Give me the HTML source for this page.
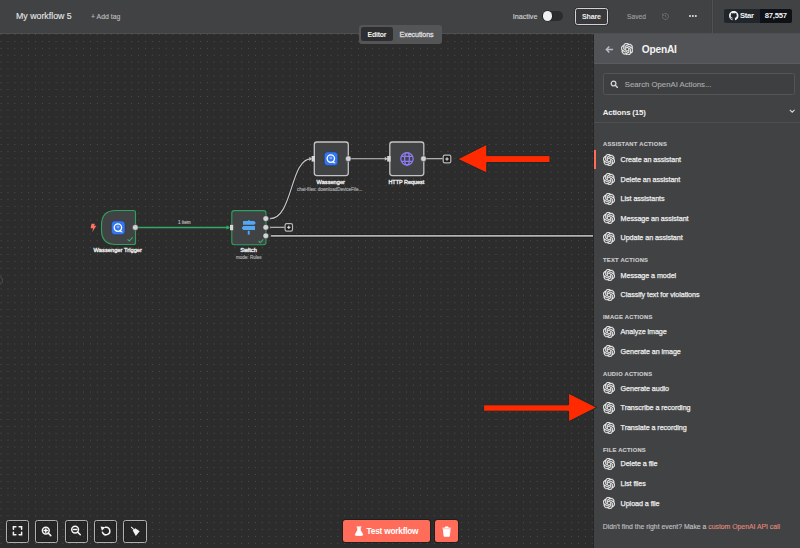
<!DOCTYPE html>
<html><head><meta charset="utf-8">
<style>
*{margin:0;padding:0;box-sizing:border-box}
html,body{width:800px;height:548px;overflow:hidden;background:#2c2c2c;font-family:"Liberation Sans",sans-serif}
.a{position:absolute;white-space:nowrap}
#hdr{position:absolute;left:0;top:0;width:800px;height:34px;background:#414244;border-bottom:1px solid #4e4f51}
#panel{position:absolute;left:594px;top:34px;width:206px;height:514px;background:#414244}
#phead{position:absolute;left:0;top:0;width:206px;height:30.2px;background:#525356;border-bottom:0.8px solid #5a5b5e}
.sec{position:absolute;left:9px;line-height:12px;font-size:5.8px;font-weight:bold;letter-spacing:0.24px;color:#cacacc;-webkit-text-stroke:0.15px #cacacc}
.it{position:absolute;left:26.6px;line-height:12px;font-size:7.2px;letter-spacing:-0.08px;color:#ececec;-webkit-text-stroke:0.25px #ececec}
.ic{position:absolute;left:8.5px;width:12px;height:12px}
.btn{position:absolute;top:519.6px;width:23.4px;height:23.4px;border:1.4px solid #b0b0b0;border-radius:2.5px;background:rgba(20,20,20,0.25);box-shadow:inset 0 0 0 0.6px #1e1e1e}
</style></head><body>
<svg class="a" style="left:0;top:0" width="800" height="548"><path d="M0.60 0.23H800M0.60 7.10H800M0.60 13.98H800M0.60 20.85H800M0.60 27.73H800M0.60 34.60H800M0.60 41.47H800M0.60 48.35H800M0.60 55.22H800M0.60 62.10H800M0.60 68.97H800M0.60 75.84H800M0.60 82.72H800M0.60 89.59H800M0.60 96.47H800M0.60 103.34H800M0.60 110.21H800M0.60 117.09H800M0.60 123.96H800M0.60 130.84H800M0.60 137.71H800M0.60 144.58H800M0.60 151.46H800M0.60 158.33H800M0.60 165.21H800M0.60 172.08H800M0.60 178.95H800M0.60 185.83H800M0.60 192.70H800M0.60 199.58H800M0.60 206.45H800M0.60 213.32H800M0.60 220.20H800M0.60 227.07H800M0.60 233.95H800M0.60 240.82H800M0.60 247.69H800M0.60 254.57H800M0.60 261.44H800M0.60 268.32H800M0.60 275.19H800M0.60 282.06H800M0.60 288.94H800M0.60 295.81H800M0.60 302.69H800M0.60 309.56H800M0.60 316.43H800M0.60 323.31H800M0.60 330.18H800M0.60 337.06H800M0.60 343.93H800M0.60 350.80H800M0.60 357.68H800M0.60 364.55H800M0.60 371.43H800M0.60 378.30H800M0.60 385.17H800M0.60 392.05H800M0.60 398.92H800M0.60 405.80H800M0.60 412.67H800M0.60 419.54H800M0.60 426.42H800M0.60 433.29H800M0.60 440.17H800M0.60 447.04H800M0.60 453.91H800M0.60 460.79H800M0.60 467.66H800M0.60 474.54H800M0.60 481.41H800M0.60 488.28H800M0.60 495.16H800M0.60 502.03H800M0.60 508.91H800M0.60 515.78H800M0.60 522.65H800M0.60 529.53H800M0.60 536.40H800M0.60 543.28H800" stroke="#505050" stroke-width="1" stroke-dasharray="1 5.874" fill="none"/></svg>

<div id="hdr">
 <div class="a" style="left:16px;top:9.4px;font-size:8.8px;color:#e8e8e8;line-height:14px;-webkit-text-stroke:0.1px #e8e8e8">My workflow 5</div>
 <div class="a" style="left:91px;top:11.2px;font-size:6.9px;color:#b9b9bb;line-height:12px;-webkit-text-stroke:0.15px #b9b9bb">+ Add tag</div>
 <div class="a" style="left:512.7px;top:11px;font-size:7.2px;color:#cfcfd1;line-height:12px;-webkit-text-stroke:0.15px #cfcfd1">Inactive</div>
 <div class="a" style="left:542px;top:11px;width:21px;height:10px;border-radius:5px;background:#2c2c2e"></div>
 <div class="a" style="left:542.8px;top:11.3px;width:9.4px;height:9.4px;border-radius:50%;background:#eef0f4;box-shadow:0 0 0 0.6px #1f1f1f"></div>
 <div class="a" style="left:574.5px;top:8.2px;width:33px;height:16.5px;border:1.3px solid #d2d2d4;border-radius:2.5px;background:#39393b;box-shadow:0 0 0 0.6px #2a2a2a"></div>
 <div class="a" style="left:582px;top:10.6px;font-size:7.1px;letter-spacing:-0.2px;font-weight:bold;color:#ececec;line-height:12px">Share</div>
 <div class="a" style="left:627px;top:11px;font-size:6.7px;color:#9c9c9e;line-height:12px;-webkit-text-stroke:0.15px #9c9c9e">Saved</div>
 <svg class="a" style="left:661px;top:12px" width="9" height="9" viewBox="0 0 24 24"><path d="M4 12a8 8 0 1 0 2.3-5.6M4 4v5h5M12 8v4l3 2" fill="none" stroke="#6e6e70" stroke-width="2.4"/></svg>
 <div class="a" style="left:689.2px;top:15.2px;width:2.2px;height:2.2px;border-radius:50%;background:#e4e4e6;box-shadow:2.9px 0 0 #e4e4e6,5.8px 0 0 #e4e4e6"></div>
 <div class="a" style="left:712px;top:0;width:1px;height:33px;background:#505153;box-shadow:-0.5px 0 0 #3b3c3e,0.5px 0 0 #3b3c3e"></div>
 <div class="a" style="left:724px;top:9px;width:36px;height:14px;background:#21262c;border-radius:2px 0 0 2px"></div>
 <div class="a" style="left:759.6px;top:9px;width:32px;height:14px;background:#0e1116;border-radius:0 2px 2px 0"></div>
 <svg class="a" style="left:729px;top:11.2px" width="9.5" height="9.5" viewBox="0 0 16 16"><path fill="#f0f0f0" d="M8 0C3.58 0 0 3.58 0 8c0 3.54 2.29 6.53 5.47 7.59.4.07.55-.17.55-.38 0-.19-.01-.82-.01-1.49-2.01.37-2.53-.49-2.69-.94-.09-.23-.48-.94-.82-1.13-.28-.15-.68-.52-.01-.53.63-.01 1.08.58 1.23.82.72 1.21 1.87.87 2.33.66.07-.52.28-.87.51-1.07-1.78-.2-3.640-.89-3.64-3.950 0-.87.31-1.59.82-2.15-.08-.2-.36-1.02.08-2.12 0 0 .67-.21 2.2.82.64-.18 1.32-.27 2-.27.68 0 1.36.09 2 .27 1.53-1.04 2.2-.82 2.2-.82.44 1.1.16 1.92.08 2.12.51.56.82 1.27.82 2.15 0 3.07-1.87 3.75-3.65 3.95.29.25.54.73.54 1.48 0 1.07-.01 1.93-.01 2.2 0 .21.15.46.55.38A8.013 8.013 0 0016 8c0-4.42-3.58-8-8-8z"/></svg>
 <div class="a" style="left:740px;top:10.4px;font-size:7.7px;letter-spacing:-0.3px;font-weight:bold;color:#f0f0f0;line-height:12px">Star</div>
 <div class="a" style="left:764.8px;top:10.4px;font-size:7.7px;letter-spacing:-0.25px;font-weight:bold;color:#f0f0f0;line-height:12px">87,557</div>
</div>

<!-- tabs -->
<div class="a" style="left:358.8px;top:25px;width:83px;height:18.5px;background:#545557;border-radius:3px"></div>
<div class="a" style="left:361.2px;top:27.2px;width:31.7px;height:13.4px;background:#2e2e30;border-radius:2.5px"></div>
<div class="a" style="left:367.5px;top:29.1px;font-size:6.9px;letter-spacing:-0.17px;font-weight:bold;color:#f2f2f2;line-height:12px">Editor</div>
<div class="a" style="left:399.6px;top:29.1px;font-size:7.1px;letter-spacing:-0.08px;color:#dcdcde;line-height:12px;-webkit-text-stroke:0.3px #dcdcde">Executions</div>

<!-- canvas graph -->
<svg class="a" style="left:0;top:0" width="594" height="548">
 <!-- edges -->
 <path d="M135.3 227.5 H229" stroke="#33a862" stroke-width="1.3" fill="none"/>
 <path d="M226.5 225.3 L230 227.5 L226.5 229.7Z" fill="#33a862"/>
 <path d="M270 218.6 C293 218.6 290 158.8 311 158.8" stroke="#1e1e1e" stroke-width="2.2" fill="none"/><path d="M270 218.6 C293 218.6 290 158.8 311 158.8" stroke="#c4c4c8" stroke-width="1.2" fill="none"/>
 <path d="M348.3 158.7 H388" stroke="#c8c8c8" stroke-width="1.1" fill="none"/>
 <path d="M423.5 158.7 H442.7" stroke="#c8c8c8" stroke-width="1.1" fill="none"/>
 <path d="M270 227.3 H284.6" stroke="#c4c4c6" stroke-width="1.1" fill="none"/>
 <path d="M271 235.9 H594" stroke="#1e1e1e" stroke-width="3.2" fill="none"/><path d="M271 235.9 H594" stroke="#b4b4b8" stroke-width="1.8" fill="none"/>
 <circle cx="-1.8" cy="280.5" r="4.3" fill="none" stroke="#505153" stroke-width="1"/>
 <!-- trigger node -->
 <path d="M116 210.5 H133.5 Q135.5 210.5 135.5 212.5 V242.5 Q135.5 244.5 133.5 244.5 H116 Q101.5 244.5 101.5 230 V225 Q101.5 210.5 116 210.5Z" fill="#414244" stroke="#30a05e" stroke-width="1.15"/>
 <rect x="111.3" y="220.8" width="13.8" height="14" rx="3.5" fill="#3274f1" stroke="#2b2823" stroke-width="0.5"/>
 <circle cx="117.9" cy="227.6" r="3.7" fill="none" stroke="#fff" stroke-width="1.3"/>
 <path d="M120.5 230.3 L122.3 232 L120 231.6Z" fill="#fff" stroke="#fff" stroke-width="0.6"/>
 <path d="M116.5 226.3h3M116.8 227.6h2.4" stroke="#cfe0ff" stroke-width="0.6"/>
 <path d="M127.5 239.3 L129.3 241 L132.6 237.4" stroke="#3ea56c" stroke-width="1.1" fill="none"/>
 <path d="M91.5 223.7 H95 L94 225.8 H96.3 L92.2 232.3 L93.1 228.3 H90.7Z" fill="#ff735f"/>
 <circle cx="135.3" cy="227.4" r="2.9" fill="#d2d2d6" stroke="#262626" stroke-width="0.5"/>
 <!-- switch node -->
 <rect x="231.8" y="210.6" width="34.2" height="34.2" rx="2.5" fill="#414244" stroke="#30a05e" stroke-width="1.1"/>
 <rect x="230" y="224.9" width="3.2" height="5.3" fill="#d6d6d6"/>
 <path d="M243 221.1 H254.2 L255.8 222.9 L254.2 224.7 H243Z" fill="#53a8f6"/>
 <path d="M255 226.1 H243.3 L241.7 228 L243.3 229.9 H255Z" fill="#53a8f6"/>
 <rect x="247.8" y="230.8" width="1.9" height="3.8" fill="#53a8f6"/>
 <rect x="247.9" y="220.2" width="1.7" height="1.2" fill="#53a8f6"/>
 <path d="M258.6 241 L260.3 242.6 L263.3 239.3" stroke="#3ea56c" stroke-width="1.1" fill="none"/>
 <circle cx="265.8" cy="218.6" r="2.9" fill="#d2d2d6" stroke="#262626" stroke-width="0.5"/>
 <circle cx="265.8" cy="227.3" r="2.9" fill="#d2d2d6" stroke="#262626" stroke-width="0.5"/>
 <circle cx="265.8" cy="235.8" r="2.9" fill="#d2d2d6" stroke="#262626" stroke-width="0.5"/>
 <g fill="#6a6a6a" font-family="Liberation Sans" font-size="3.2"><text x="269.6" y="220">0</text><text x="269.6" y="228.6">1</text><text x="269.6" y="237.2">2</text></g>
 <rect x="285.1" y="223.7" width="7.4" height="7.4" rx="1.6" fill="#1e1e1e" stroke="#b8b8ba" stroke-width="1.2"/>
 <path d="M288.8 225.6v3.4M287.1 227.3h3.4" stroke="#e8e8e8" stroke-width="1"/>
 <!-- wassenger node -->
 <rect x="314.3" y="142" width="34" height="33.6" rx="2.5" fill="#414244" stroke="#c3c3c5" stroke-width="1.3"/>
 <rect x="311.6" y="156" width="3.4" height="5.6" fill="#d6d6d6"/>
 <rect x="324.2" y="151.8" width="13.7" height="13.9" rx="3.5" fill="#3274f1" stroke="#2b2823" stroke-width="0.5"/>
 <circle cx="330.8" cy="158.6" r="3.7" fill="none" stroke="#fff" stroke-width="1.3"/>
 <path d="M333.4 161.3 L335.2 163 L332.9 162.6Z" fill="#fff" stroke="#fff" stroke-width="0.6"/>
 <path d="M329.4 157.3h3M329.7 158.6h2.4" stroke="#cfe0ff" stroke-width="0.6"/>
 <circle cx="348.3" cy="158.7" r="2.9" fill="#d2d2d6" stroke="#262626" stroke-width="0.5"/>
 <!-- http node -->
 <rect x="389.8" y="142" width="34" height="33.6" rx="2.5" fill="#414244" stroke="#c3c3c5" stroke-width="1.3"/>
 <rect x="387.2" y="156" width="3.4" height="5.6" fill="#d6d6d6"/>
 <g fill="none" stroke="#8b7bf2" stroke-width="1.3">
  <circle cx="407" cy="158.8" r="6.2"/>
  <ellipse cx="407" cy="158.8" rx="2.4" ry="6.2"/>
  <path d="M401.5 156.3h11M401.5 161.3h11"/>
 </g>
 <circle cx="423.5" cy="158.7" r="2.9" fill="#d2d2d6" stroke="#262626" stroke-width="0.5"/>
 <rect x="443.2" y="155.2" width="7.6" height="7.6" rx="1.6" fill="#1e1e1e" stroke="#b8b8ba" stroke-width="1.2"/>
 <path d="M447 157.3v3.4M445.3 159h3.4" stroke="#e8e8e8" stroke-width="1"/>
 <path d="M309.3 156.7L312.2 158.8L309.3 160.9Z" fill="#c4c4c6"/>
 <path d="M384.8 156.7L387.7 158.7L384.8 160.7Z" fill="#c4c4c6"/>
 <!-- red arrows -->
 <path d="M457.6 159.1 L486.8 144.3 V155.6 H550 V162.5 H486.8 V173Z" fill="#ff2a00" stroke="#1c2a2c" stroke-width="1"/>
</svg>

<!-- node labels -->
<div class="a" style="left:93.6px;top:244px;font-size:5.75px;color:#ececec;line-height:12px;-webkit-text-stroke:0.35px #ececec">Wassenger Trigger</div>
<div class="a" style="left:178px;top:217px;font-size:4.6px;color:#b4b4b6;line-height:12px;-webkit-text-stroke:0.2px #b4b4b6">1 item</div>
<div class="a" style="left:240.2px;top:244px;font-size:5.65px;color:#ececec;line-height:12px;-webkit-text-stroke:0.35px #ececec">Switch</div>
<div class="a" style="left:236px;top:252.3px;font-size:4.55px;color:#a4a4a6;line-height:12px;-webkit-text-stroke:0.2px #a4a4a6">mode: Rules</div>
<div class="a" style="left:316.6px;top:175.6px;font-size:5.65px;color:#ececec;line-height:12px;-webkit-text-stroke:0.35px #ececec">Wassenger</div>
<div class="a" style="left:297px;top:183.6px;font-size:4.55px;color:#a4a4a6;line-height:12px;-webkit-text-stroke:0.2px #a4a4a6">chat-files: downloadDeviceFile...</div>
<div class="a" style="left:388.4px;top:175.6px;font-size:5.45px;color:#ececec;line-height:12px;-webkit-text-stroke:0.35px #ececec">HTTP Request</div>

<!-- panel -->
<div class="a" style="left:593px;top:34px;width:1px;height:514px;background:#262627"></div>
<div id="panel">
 <svg width="0" height="0" style="position:absolute"><defs><symbol id="oai" viewBox="0 0 24 24"><path fill="#f2f2f2" stroke="#f2f2f2" stroke-width="0.7" d="M22.2819 9.8211a5.9847 5.9847 0 0 0-.5157-4.9108 6.0462 6.0462 0 0 0-6.5098-2.9A6.0651 6.0651 0 0 0 4.9807 4.1818a5.9847 5.9847 0 0 0-3.9977 2.9 6.0462 6.0462 0 0 0 .7427 7.0966 5.98 5.98 0 0 0 .511 4.9107 6.051 6.051 0 0 0 6.5146 2.9001A5.9847 5.9847 0 0 0 13.2599 24a6.0557 6.0557 0 0 0 5.7718-4.2058 5.9894 5.9894 0 0 0 3.9977-2.9001 6.0557 6.0557 0 0 0-.7475-7.0729zm-9.022 12.6081a4.4755 4.4755 0 0 1-2.8764-1.0408l.1419-.0804 4.7783-2.7582a.7948.7948 0 0 0 .3927-.6813v-6.7369l2.02 1.1686a.071.071 0 0 1 .038.052v5.5826a4.504 4.504 0 0 1-4.4945 4.4944zm-9.6607-4.1254a4.4708 4.4708 0 0 1-.5346-3.0137l.142.0852 4.783 2.7582a.7712.7712 0 0 0 .7806 0l5.8428-3.3685v2.3324a.0804.0804 0 0 1-.0332.0615L9.74 19.9502a4.4992 4.4992 0 0 1-6.1408-1.6464zM2.3408 7.8956a4.485 4.485 0 0 1 2.3655-1.9728V11.6a.7664.7664 0 0 0 .3879.6765l5.8144 3.3543-2.0201 1.1685a.0757.0757 0 0 1-.071 0l-4.8303-2.7865A4.504 4.504 0 0 1 2.3408 7.872zm16.5963 3.8558L13.1038 8.364 15.1192 7.2a.0757.0757 0 0 1 .071 0l4.8303 2.7913a4.4944 4.4944 0 0 1-.6765 8.1042v-5.6772a.79.79 0 0 0-.407-.667zm2.0107-3.0231l-.142-.0852-4.7735-2.7818a.7759.7759 0 0 0-.7854 0L9.409 9.2297V6.8974a.0662.0662 0 0 1 .0284-.0615l4.8303-2.7866a4.4992 4.4992 0 0 1 6.6802 4.66zM8.3065 12.863l-2.02-1.1638a.0804.0804 0 0 1-.038-.0567V6.0742a4.4992 4.4992 0 0 1 7.3757-3.4537l-.142.0805L8.704 5.459a.7948.7948 0 0 0-.3927.6813zm1.0976-2.3654l2.602-1.4998 2.6069 1.4998v2.9994l-2.5974 1.4997-2.6067-1.4997Z"/></symbol></defs></svg>
 <div id="phead">
  <svg class="a" style="left:10.5px;top:10.5px" width="9" height="9" viewBox="0 0 24 24"><path d="M21.5 12H4.5M11.5 4L3.5 12L11.5 20" fill="none" stroke="#b9bcc6" stroke-width="3.8"/></svg>
  <svg class="a" style="left:27px;top:8.8px" width="12.4" height="12.4" viewBox="0 0 24 24"><use href="#oai"/></svg>
  <div class="a" style="left:47.8px;top:9.9px;font-size:10.2px;letter-spacing:-0.22px;font-weight:bold;color:#f2f2f2;line-height:12px">OpenAI</div>
 </div>
 <div class="a" style="left:8.7px;top:39.2px;width:192.2px;height:22px;border:1px solid #545557;border-radius:2.5px;background:#3e3f41"></div>
 <svg class="a" style="left:15.5px;top:45.8px" width="8.5" height="8.5" viewBox="0 0 24 24"><circle cx="10" cy="10" r="6.6" fill="none" stroke="#d6d6d8" stroke-width="3.6"/><path d="M15 15L21 21" stroke="#d6d6d8" stroke-width="3.8" stroke-linecap="round"/></svg>
 <div class="a" style="left:30.8px;top:44.5px;font-size:7.75px;color:#a8a8aa;line-height:12px;-webkit-text-stroke:0.15px #a8a8aa">Search OpenAI Actions...</div>
 <div class="a" style="left:8.7px;top:72.9px;font-size:7.9px;letter-spacing:-0.18px;font-weight:bold;color:#f0f0f0;line-height:12px">Actions (15)</div>
 <svg class="a" style="left:195.4px;top:74.5px" width="6.4" height="4" viewBox="0 0 16 10"><path d="M2 2L8 8L14 2" fill="none" stroke="#d8d8d8" stroke-width="2.6"/></svg>
 <div class="a" style="left:0;top:88px;width:206px;height:1px;background:#4e4f51"></div>
 <div class="a" style="left:0;top:115.8px;width:1.5px;height:19.6px;background:#ff6d5a"></div>
 <div class="sec" style="top:calc(104.5px - 0.2px)">ASSISTANT ACTIONS</div>
 <svg class="ic" style="top:119.7px" viewBox="0 0 24 24"><use href="#oai"/></svg><div class="it" style="top:120.1px">Create an assistant</div>
 <svg class="ic" style="top:139.2px" viewBox="0 0 24 24"><use href="#oai"/></svg><div class="it" style="top:139.6px">Delete an assistant</div>
 <svg class="ic" style="top:158.7px" viewBox="0 0 24 24"><use href="#oai"/></svg><div class="it" style="top:159.1px">List assistants</div>
 <svg class="ic" style="top:178.2px" viewBox="0 0 24 24"><use href="#oai"/></svg><div class="it" style="top:178.6px">Message an assistant</div>
 <svg class="ic" style="top:197.7px" viewBox="0 0 24 24"><use href="#oai"/></svg><div class="it" style="top:198.1px">Update an assistant</div>
 <div class="sec" style="top:calc(220.0px - 0.2px)">TEXT ACTIONS</div>
 <svg class="ic" style="top:235.1px" viewBox="0 0 24 24"><use href="#oai"/></svg><div class="it" style="top:235.5px">Message a model</div>
 <svg class="ic" style="top:254.6px" viewBox="0 0 24 24"><use href="#oai"/></svg><div class="it" style="top:255.0px">Classify text for violations</div>
 <div class="sec" style="top:calc(276.7px - 0.2px)">IMAGE ACTIONS</div>
 <svg class="ic" style="top:291.7px" viewBox="0 0 24 24"><use href="#oai"/></svg><div class="it" style="top:292.1px">Analyze image</div>
 <svg class="ic" style="top:311.4px" viewBox="0 0 24 24"><use href="#oai"/></svg><div class="it" style="top:311.8px">Generate an image</div>
 <div class="sec" style="top:calc(333.7px - 0.2px)">AUDIO ACTIONS</div>
 <svg class="ic" style="top:348.1px" viewBox="0 0 24 24"><use href="#oai"/></svg><div class="it" style="top:348.5px">Generate audio</div>
 <svg class="ic" style="top:368.0px" viewBox="0 0 24 24"><use href="#oai"/></svg><div class="it" style="top:368.4px">Transcribe a recording</div>
 <svg class="ic" style="top:387.6px" viewBox="0 0 24 24"><use href="#oai"/></svg><div class="it" style="top:388.0px">Translate a recording</div>
 <div class="sec" style="top:calc(409.9px - 0.2px)">FILE ACTIONS</div>
 <svg class="ic" style="top:424.0px" viewBox="0 0 24 24"><use href="#oai"/></svg><div class="it" style="top:424.4px">Delete a file</div>
 <svg class="ic" style="top:443.5px" viewBox="0 0 24 24"><use href="#oai"/></svg><div class="it" style="top:443.9px">List files</div>
 <svg class="ic" style="top:463.4px" viewBox="0 0 24 24"><use href="#oai"/></svg><div class="it" style="top:463.8px">Upload a file</div>
 <div class="a" style="left:8.7px;top:487.4px;font-size:6.85px;color:#c2c2c4;line-height:12px;-webkit-text-stroke:0.12px #c2c2c4">Didn't find the right event? Make a <span style="color:#f0735f">custom OpenAI API call</span></div>
</div>

<!-- bottom buttons -->
<div class="btn" style="left:5.8px"></div>
<div class="btn" style="left:35.1px"></div>
<div class="btn" style="left:64.5px"></div>
<div class="btn" style="left:93.9px"></div>
<div class="btn" style="left:123.2px"></div>
<div class="a" style="left:342.9px;top:519.8px;width:87px;height:22.6px;background:#ff6d5a;border-radius:2.5px;box-shadow:0 0 0 1px #1f1f1f"></div>
<div class="a" style="left:366.6px;top:525.3px;font-size:8.3px;letter-spacing:-0.23px;font-weight:bold;color:#fff;line-height:12px">Test workflow</div>
<div class="a" style="left:435px;top:519.8px;width:23.1px;height:22.6px;background:#ff6d5a;border-radius:2.5px;box-shadow:0 0 0 1px #1f1f1f"></div>
<svg class="a" style="left:470px;top:380px" width="140" height="50"><path d="M126.8 27.4 L98.6 13.2 V24.8 H13.6 V31.2 H98.6 V41.7Z" fill="#ff2a00" stroke="#1c2a2c" stroke-width="1"/></svg>
<svg class="a" style="left:0;top:500px" width="480" height="48">
 <g fill="none" stroke="#f4f4f4" stroke-width="1.5" stroke-linecap="round">
  <path d="M13.4 29.3V26.8H15.9M19.1 26.8H21.6V29.3M21.6 32.3V34.8H19.1M15.9 34.8H13.4V32.3"/>
  <circle cx="45.8" cy="30.6" r="3.4"/><path d="M48.3 33.1L50.8 35.6M44.2 30.6H47.4M45.8 29V32.2"/>
  <circle cx="75.1" cy="29.6" r="3.4"/><path d="M77.6 32.1L80.3 34.8M73.5 29.6H76.7"/>
  <path d="M105.34 27.26A3.8 3.8 0 1 1 102.43 32.3"/>
 </g>
 <path d="M100.6 26.4L105.3 27.3L101.9 30.8Z" fill="#f4f4f4"/>
 <path d="M132.7 30.4L135.3 28.3L139.7 31.3L135.8 36Z" fill="#f4f4f4"/>
 <path d="M131.1 26.9L134 29.6" stroke="#f4f4f4" stroke-width="1.1" fill="none"/>
 <path d="M356.6 26.9H361.4M357.7 26.9V30.2L355.4 34.3Q355 35.4 356.2 35.4H361.8Q363 35.4 362.6 34.3L360.3 30.2V26.9" fill="#ffffff" stroke="#ffffff" stroke-width="0.9" stroke-linejoin="round"/>
 <path d="M442.3 28.2H451.1M445.3 28V26.9H448.1V28M443.3 29.3H450.1L449.3 36.3H444.1Z" fill="#ffffff" stroke="#ffffff" stroke-width="0.9" stroke-linejoin="round"/>
</svg>
</body></html>
